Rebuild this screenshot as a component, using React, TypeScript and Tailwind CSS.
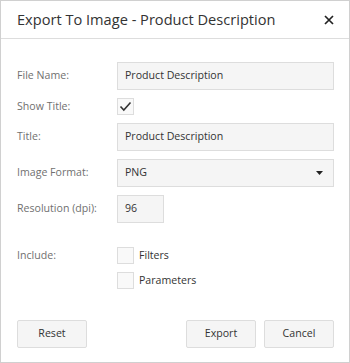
import React from 'react';

const font = { fontFamily: '"Open Sans", "Noto Sans", sans-serif' };

function Check({ checked }: { checked?: boolean }) {
  return (
    <div className="w-[17px] h-[17px] border border-[#dddddd] bg-[#f9f9f9] flex items-center justify-center shrink-0">
      {checked && (
        <svg width="13" height="11" viewBox="0 0 13 11">
          <path d="M1.5 5.5 L4.8 9 L11.5 1.5" fill="none" stroke="#333" strokeWidth="1.6" />
        </svg>
      )}
    </div>
  );
}

function Label({ children }: { children: React.ReactNode }) {
  return <div className="w-[100px] shrink-0 text-[#707070]">{children}</div>;
}

function Field({ value, className = '' }: { value: string; className?: string }) {
  return (
    <div className={`h-[28px] border border-[#dddddd] bg-[#f5f5f5] text-[#333] flex items-center px-[7px] ${className}`}>
      {value}
    </div>
  );
}

export default function App() {
  return (
    <div className="w-[350px] h-[363px] bg-white border border-[#d0d0d0] flex flex-col text-[10.6px]" style={font}>
      {/* Header */}
      <div className="h-[38px] border-b border-[#dddddd] flex items-center justify-between pl-[16px] pr-[15px] shrink-0">
        <span className="text-[14.6px] text-[#333]">Export To Image - Product Description</span>
        <svg width="10" height="10" viewBox="0 0 10 10">
          <path d="M1 1 L9 9 M9 1 L1 9" stroke="#222" strokeWidth="1.7" />
        </svg>
      </div>

      {/* Body */}
      <div className="flex-1 flex flex-col pl-[16px] pr-[15px] pt-[23px]">
        <div className="flex items-center">
          <Label>File Name:</Label>
          <Field value="Product Description" className="flex-1" />
        </div>
        <div className="flex items-center mt-[8px]">
          <Label>Show Title:</Label>
          <Check checked />
        </div>
        <div className="flex items-center mt-[8px]">
          <Label>Title:</Label>
          <Field value="Product Description" className="flex-1" />
        </div>
        <div className="flex items-center mt-[8px]">
          <Label>Image Format:</Label>
          <div className="flex-1 h-[28px] border border-[#dddddd] bg-[#f5f5f5] text-[#333] flex items-center justify-between px-[7px]">
            <span>PNG</span>
            <svg width="7" height="4" viewBox="0 0 7 4" className="mr-[3px]">
              <path d="M0 0 L7 0 L3.5 4 Z" fill="#222" />
            </svg>
          </div>
        </div>
        <div className="flex items-center mt-[8px]">
          <Label>Resolution (dpi):</Label>
          <Field value="96" className="w-[47px]" />
        </div>
        <div className="flex items-center mt-[24px]">
          <Label>Include:</Label>
          <Check />
          <span className="ml-[5px] text-[#333]">Filters</span>
        </div>
        <div className="flex items-center mt-[8px]">
          <div className="w-[100px] shrink-0" />
          <Check />
          <span className="ml-[5px] text-[#333]">Parameters</span>
        </div>

        <div className="flex items-center justify-between mt-[31px]">
          <button className="w-[70px] h-[28px] border border-[#dddddd] bg-[#f5f5f5] rounded-[2px] text-[#333]">Reset</button>
          <div className="flex gap-[8px]">
            <button className="w-[70px] h-[28px] border border-[#dddddd] bg-[#f5f5f5] rounded-[2px] text-[#333]">Export</button>
            <button className="w-[70px] h-[28px] border border-[#dddddd] bg-[#f5f5f5] rounded-[2px] text-[#333]">Cancel</button>
          </div>
        </div>
      </div>
    </div>
  );
}
